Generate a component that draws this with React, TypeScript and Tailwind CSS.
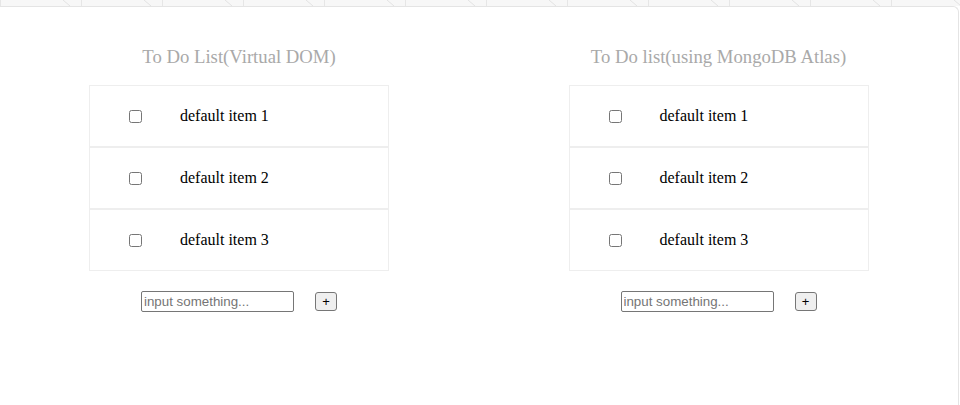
import React, { useState } from 'react';

const Tab: React.FC = () => (
    <div className="relative w-[81px] h-[6px] shrink-0 border-l border-[#e6e6e6] bg-[#f7f7f7]">
        <svg className="absolute left-[62px] top-0" width="8" height="6" viewBox="0 0 8 6">
            <line x1="0" y1="0" x2="7" y2="6" stroke="#e2e2e2" strokeWidth="1" />
        </svg>
    </div>
);

const TodoList: React.FC<{ title: string }> = ({ title }) => {
    const [items, setItems] = useState<string[]>(['default item 1', 'default item 2', 'default item 3']);
    const [text, setText] = useState('');

    const addItem = () => {
        if (!text.trim()) return;
        setItems([...items, text]);
        setText('');
    };

    return (
        <div className="flex flex-col items-center">
            <h3 className="text-[18.72px] leading-[22px] text-[#a9a9a9] mt-[39px] mb-[17px]">{title}</h3>
            <ul className="w-[300px]">
                {items.map((item, i) => (
                    <li key={i} className="h-[62px] border border-[#eeeeee] flex items-center text-[16px] text-black">
                        <input type="checkbox" className="ml-[39px] w-[13px] h-[13px] accent-[#767676]" />
                        <span className="ml-[38px]">{item}</span>
                    </li>
                ))}
            </ul>
            <div className="flex items-center mt-[20px] gap-[21px]" style={{ fontFamily: '"Liberation Sans", Arial, sans-serif' }}>
                <input
                    value={text}
                    onChange={(e) => setText(e.target.value)}
                    placeholder="input something..."
                    className="w-[153px] h-[21px] border border-[#767676] rounded-[2px] px-[2px] text-[13.33px] text-black placeholder:text-[#757575] outline-none"
                />
                <button
                    onClick={addItem}
                    className="w-[22px] h-[19px] border border-[#767676] rounded-[3px] bg-[#efefef] text-[13px] leading-none text-black flex items-center justify-center"
                >
                    +
                </button>
            </div>
        </div>
    );
};

export default function App() {
    return (
        <div className="w-[960px] h-[405px] bg-white overflow-hidden" style={{ fontFamily: '"Liberation Serif", "Times New Roman", serif' }}>
            <div className="flex h-[6px]">
                {Array.from({ length: 12 }).map((_, i) => (
                    <Tab key={i} />
                ))}
            </div>
            <div className="w-[959px] h-[399px] bg-white border-r border-t border-[#e4e4e4] rounded-tr-[6px] grid grid-cols-[478px_481px]">
                <TodoList title="To Do List(Virtual DOM)" />
                <TodoList title="To Do list(using MongoDB Atlas)" />
            </div>
        </div>
    );
}
